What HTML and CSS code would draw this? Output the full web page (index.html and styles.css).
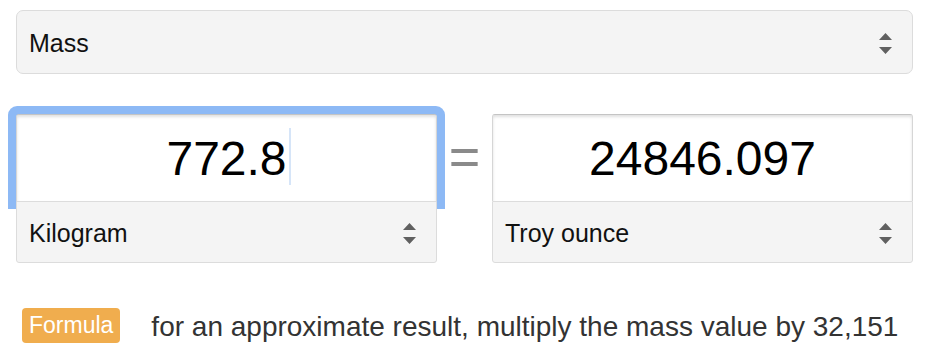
FILE: index.html
```html
<!DOCTYPE html>
<html lang="en">
<head>
    <meta charset="UTF-8">
    <meta name="viewport" content="width=device-width, initial-scale=1.0">
    <title>Mass converter</title>
    <link rel="stylesheet" href="styles.css">
</head>
<body>

    <div class="converter">
        <div class="select select-type">
            <span>Mass</span>
            <svg class="arrows" width="13" height="21" viewBox="0 0 13 21"><path d="M6.5 0 L13 7 H0 Z M0 14 H13 L6.5 21 Z"/></svg>
        </div>

        <div class="unit-row">
            <div class="unit-box">
                <div class="amount-wrap">
                    <input type="text" class="amount is-focused" value="772.8" />
                    <span class="caret"></span>
                </div>
                <div class="select select-unit">
                    <span>Kilogram</span>
                    <svg class="arrows" width="13" height="21" viewBox="0 0 13 21"><path d="M6.5 0 L13 7 H0 Z M0 14 H13 L6.5 21 Z"/></svg>
                </div>
            </div>

            <div class="equals">=</div>

            <div class="unit-box">
                <div class="amount-wrap">
                    <input type="text" class="amount" value="24846.097" readonly />
                </div>
                <div class="select select-unit">
                    <span>Troy ounce</span>
                    <svg class="arrows" width="13" height="21" viewBox="0 0 13 21"><path d="M6.5 0 L13 7 H0 Z M0 14 H13 L6.5 21 Z"/></svg>
                </div>
            </div>
        </div>

        <p class="formula">
            <span class="badge">Formula</span>
            <span class="formula-text">for an approximate result, multiply the mass value by 32,151</span>
        </p>
    </div>

</body>
</html>
```

FILE: styles.css
```css
body {
    background-color: white;
    color: black;
    font-family: "Liberation Sans", Arial, sans-serif;
    margin: 0;
    padding: 0;
}

.converter {
    padding: 10px 31px 0 16px;
}

.select {
    display: flex;
    align-items: center;
    justify-content: space-between;
    box-sizing: border-box;
    background-color: #f4f4f4;
    border: 1px solid #dcdcdc;
    font-size: 25px;
    color: #111;
}

.select .arrows {
    fill: #606060;
}

.select-type {
    height: 64px;
    padding: 2px 20px 0 12px;
    border-radius: 7px;
}

.unit-row {
    display: grid;
    grid-template-columns: 1fr 55px 1fr;
    margin-top: 40px;
}

.amount-wrap {
    position: relative;
}

.amount {
    display: block;
    box-sizing: border-box;
    width: 100%;
    height: 87px;
    margin: 0;
    padding: 0 10px;
    border: 1px solid #d6d6d6;
    border-top-color: #c4c4c4;
    border-bottom: none;
    border-radius: 3px 3px 0 0;
    background-color: white;
    box-shadow: inset 0 2px 3px rgba(0, 0, 0, 0.12);
    font-family: inherit;
    font-size: 48px;
    color: black;
    text-align: center;
    outline: none;
    caret-color: transparent;
}

.amount.is-focused {
    box-shadow: inset 0 2px 3px rgba(0, 0, 0, 0.12), 0 0 0 8px #8db9f5;
}

/* blinking text cursor, frozen */
.caret {
    position: absolute;
    top: 14px;
    left: calc(50% + 62px);
    width: 2px;
    height: 57px;
    background-color: #d6e5f8;
}

/* sits above the focus ring of the input */
.select-unit {
    position: relative;
    height: 62px;
    padding: 2px 20px 0 12px;
    border-radius: 0 0 3px 3px;
}

.equals {
    display: flex;
    justify-content: center;
    align-items: flex-start;
    padding-top: 15px;
    font-size: 54px;
    color: #8a8a8a;
    line-height: 1;
}

.formula {
    display: flex;
    align-items: center;
    margin: 45px 0 0 6px;
}

.badge {
    display: inline-flex;
    align-items: center;
    height: 35px;
    padding: 0 7px;
    border-radius: 4px;
    background-color: #f0ad4e;
    color: white;
    font-size: 23px;
}

.formula-text {
    margin-left: 31px;
    padding-top: 3px;
    font-size: 28px;
    color: #333;
}
```
